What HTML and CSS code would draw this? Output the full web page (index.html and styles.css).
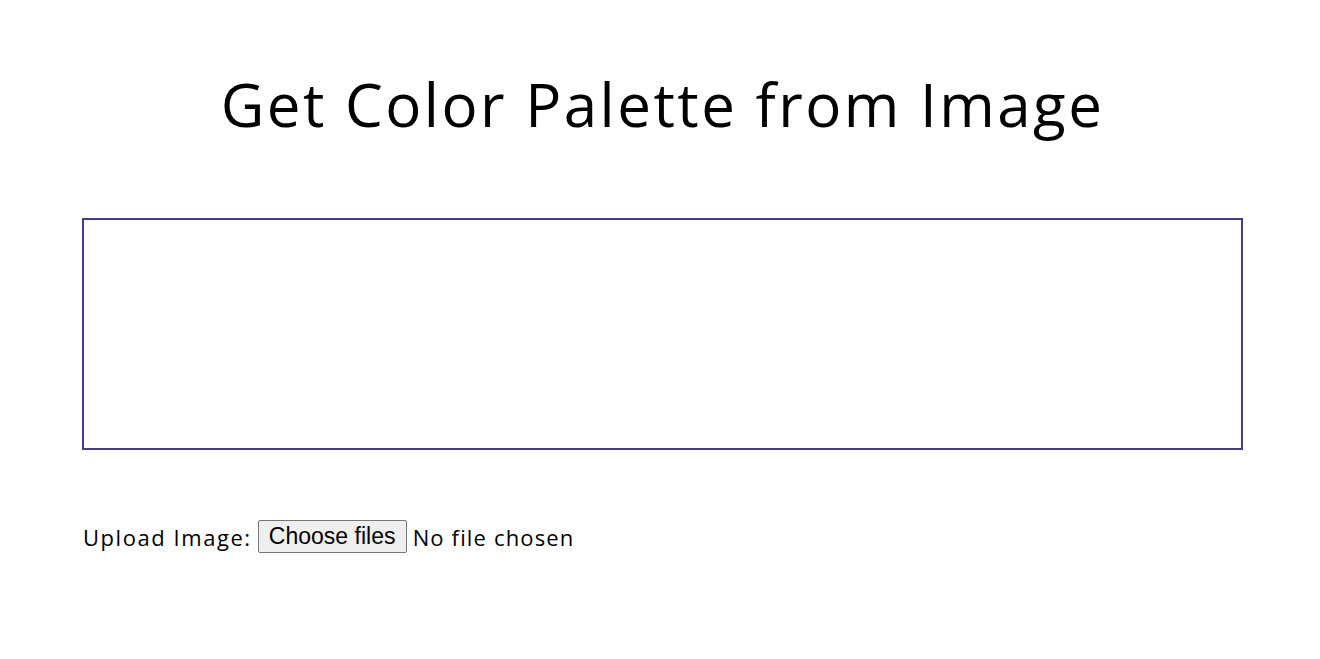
FILE: index.html
```html
<!DOCTYPE html>
<html lang="en">
<head>
<meta charset="utf-8">
<title>Get Color Palette from Image</title>
<link rel="stylesheet" href="styles.css">
</head>
<body>
<main class="page">
  <h1 class="title">Get Color Palette from Image</h1>
  <div class="palette"></div>
  <div class="upload">
    <span class="upload-label">Upload Image:</span>
    <label class="file-picker">
      <input class="file-input" type="file" accept="image/*" multiple>
      <span class="file-button">Choose files</span>
      <span class="file-status">No file chosen</span>
    </label>
  </div>
</main>
</body>
</html>
```
FILE: styles.css
```css
html, body {
  margin: 0;
  padding: 0;
  background: #ffffff;
}

.page {
  font-family: "Open Sans", "DejaVu Sans", sans-serif;
  color: #000;
  padding: 68px 77px 0 82px;
}

.title {
  margin: 0;
  text-align: center;
  font-weight: 400;
  font-size: 60px;
  line-height: 72px;
  letter-spacing: 2.5px;
}

.palette {
  margin-top: 78px;
  height: 228px;
  border: 2px solid #483d8b;
}

.upload {
  margin-top: 70px;
  display: flex;
  align-items: center;
  gap: 6px;
  font-size: 22px;
}

.upload-label {
  padding-left: 1px;
  letter-spacing: 1.55px;
}

.file-picker {
  display: flex;
  align-items: center;
  gap: 6px;
  cursor: pointer;
}

.file-status {
  letter-spacing: 1.15px;
}

.file-input {
  position: absolute;
  width: 1px;
  height: 1px;
  opacity: 0;
  overflow: hidden;
}

.file-button {
  box-sizing: border-box;
  height: 33px;
  width: 149px;
  display: flex;
  align-items: center;
  justify-content: center;
  font-family: "Liberation Sans", Arial, sans-serif;
  font-size: 23px;
  color: #000;
  background: #efefef;
  border: 1px solid #767676;
  border-radius: 2px;
}
```
